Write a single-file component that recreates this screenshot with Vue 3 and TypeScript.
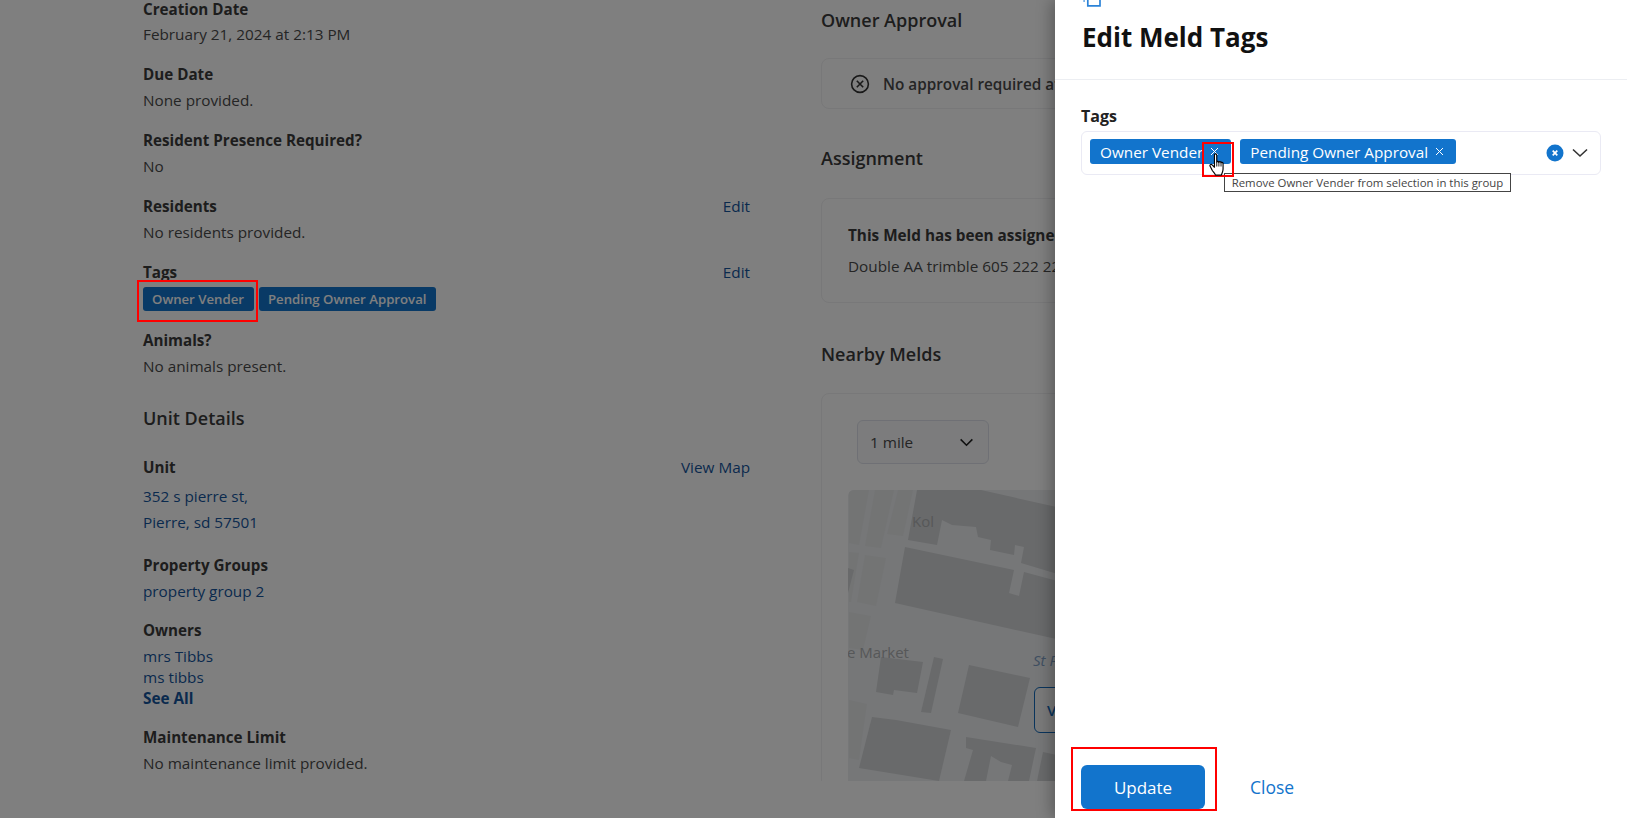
<script setup lang="ts">
interface Field {
  label: string
  value: string
  edit?: string
}

const topFields: Field[] = [
  { label: 'Creation Date', value: 'February 21, 2024 at 2:13 PM' },
  { label: 'Due Date', value: 'None provided.' },
  { label: 'Resident Presence Required?', value: 'No' },
  { label: 'Residents', value: 'No residents provided.', edit: 'Edit' },
]

const tags = ['Owner Vender', 'Pending Owner Approval']

const mapStrips = [
  '848,490 868,490 858,545 848,543',
  '874,490 893,490 880,548 864,546',
  '897,490 912,490 902,536 886,534',
  '848,552 858,553 850,602 848,602',
  '864,555 885,558 875,606 856,602',
  '848,612 870,616 862,650 848,648',
  '848,700 866,704 858,760 848,758',
]

const mapBlocks = [
  '916,490 980,490 1060,508 1060,575 1020,563 1023,547 1014,545 1013,555 989,550 990,540 977,537 975,527 951,525 941,520 936,545 907,540',
  '904,547 1013,570 1008,593 1018,596 1023,572 1060,582 1060,640 894,603',
  '880,657 922,662 916,693 893,690 892,695 875,692',
  '933,657 942,659 930,713 920,712',
  '968,665 1029,678 1017,727 957,713',
  '871,717 895,720 950,730 938,781 858,768',
  '965,737 1035,748 1028,781 1007,781 1011,765 1000,762 990,756 985,781 963,781 972,750 965,748',
  '1042,752 1060,756 1060,781 1036,781',
  '847,568 853,570 847,593',
]
</script>

<template>
  <div class="screen">
    <div class="page">
      <section class="left-col">
        <div v-for="field in topFields" :key="field.label" class="field">
          <div class="label-row">
            <span class="label">{{ field.label }}</span>
            <a v-if="field.edit" class="link">{{ field.edit }}</a>
          </div>
          <div class="value">{{ field.value }}</div>
        </div>

        <div class="label-row tags-label">
          <span class="label">Tags</span>
          <a class="link">Edit</a>
        </div>
        <div class="tag-list">
          <span v-for="tag in tags" :key="tag" class="tag">{{ tag }}</span>
        </div>

        <div class="field animals">
          <div class="label-row"><span class="label">Animals?</span></div>
          <div class="value">No animals present.</div>
        </div>

        <h2 class="section-title unit-title">Unit Details</h2>

        <div class="label-row unit-label"><span class="label">Unit</span><a class="link">View Map</a></div>
        <div class="address">
          <a class="link">352 s pierre st,</a>
          <a class="link">Pierre, sd 57501</a>
        </div>

        <div class="label-row group-label"><span class="label">Property Groups</span></div>
        <div class="group-value"><a class="link">property group 2</a></div>

        <div class="label-row"><span class="label">Owners</span></div>
        <div class="owners">
          <a class="link">mrs Tibbs</a>
          <a class="link">ms tibbs</a>
          <a class="link see-all">See All</a>
        </div>

        <div class="label-row"><span class="label">Maintenance Limit</span></div>
        <div class="value">No maintenance limit provided.</div>
      </section>

      <section class="right-col">
        <h2 class="section-title approval-title">Owner Approval</h2>
        <div class="card approval-card">
          <svg class="approval-icon" viewBox="0 0 20 20" width="20" height="20">
            <circle cx="10" cy="10" r="8.4" fill="none" stroke="#333" stroke-width="1.6" />
            <path d="M6.8 6.8l6.4 6.4M13.2 6.8l-6.4 6.4" fill="none" stroke="#333" stroke-width="1.6" />
          </svg>
          <span class="approval-text">No approval required at this time</span>
        </div>

        <h2 class="section-title assign-heading">Assignment</h2>
        <div class="card assign-card">
          <div class="assign-title">This Meld has been assigned to</div>
          <div class="assign-name">Double AA trimble 605 222 2222</div>
        </div>

        <h2 class="section-title">Nearby Melds</h2>
        <div class="card nearby-card">
          <div class="select">
            <span>1 mile</span>
            <svg viewBox="0 0 16 10" width="15" height="9">
              <path d="M1.5 1.5L8 8l6.5-6.5" fill="none" stroke="#222" stroke-width="1.8" />
            </svg>
          </div>
          <div class="map">
            <svg class="map-art" viewBox="847 490 213 291" width="213" height="291">
              <polygon v-for="points in mapStrips" :key="points" :points="points" fill="#e6e8e9" />
              <polygon v-for="points in mapBlocks" :key="points" :points="points" fill="#d2d4d6" />
              <text x="911" y="527" class="map-label">Kol</text>
              <text x="846" y="658" class="map-label">e Market</text>
              <text x="1032" y="666" class="map-label map-street">St P</text>
            </svg>
            <button class="map-button">View</button>
          </div>
        </div>
      </section>
    </div>

    <div class="backdrop"></div>

    <aside class="panel">
      <header class="panel-head">
        <svg class="copy-icon" viewBox="0 0 18 7" width="18" height="7">
          <path d="M4.8 -3H17V5.8H4.8Z" fill="none" stroke="#2b83d8" stroke-width="1.7" />
          <path d="M0.4 1h1.4" fill="none" stroke="#2b83d8" stroke-width="1.6" />
        </svg>
        <h1 class="panel-title">Edit Meld Tags</h1>
      </header>

      <div class="panel-body">
        <div class="tags-field-label">Tags</div>
        <div class="tag-control">
          <span v-for="tag in tags" :key="tag" class="chip">
            {{ tag }}
            <svg viewBox="0 0 9 9" width="9" height="9">
              <path d="M1 1l7 7M8 1L1 8" fill="none" stroke="#fff" stroke-width="1" />
            </svg>
          </span>
          <span class="control-spacer"></span>
          <svg class="clear-icon" viewBox="0 0 18 18" width="18" height="18">
            <circle cx="9" cy="9" r="8.5" fill="#1274cc" />
            <path d="M6.7 6.7l4.6 4.6M11.3 6.7l-4.6 4.6" fill="none" stroke="#fff" stroke-width="1.7" />
          </svg>
          <svg class="chevron-icon" viewBox="0 0 16 10" width="16" height="10">
            <path d="M1 1.5L8 8l7-6.5" fill="none" stroke="#333" stroke-width="1.6" />
          </svg>
        </div>
        <div class="tooltip">Remove Owner Vender from selection in this group</div>
      </div>

      <footer class="panel-foot">
        <button class="update-btn">Update</button>
        <a class="close-link">Close</a>
      </footer>
    </aside>

    <!-- annotation boxes and the pointer sit above everything -->
    <div class="mark mark-tag"></div>
    <div class="mark mark-remove"></div>
    <div class="mark mark-update"></div>
    <svg class="pointer" viewBox="0 0 20 27" width="18" height="24">
      <path
        d="M6 2.2c0-1.6 2.6-1.6 2.6 0v8c0-1 2.4-1 2.4.4 0-1.2 2.4-1.2 2.4.4 0-1 2.3-.9 2.3.7v6.4c0 3-1.4 4.4-1.9 6.8H7.2c-.7-2-2.2-3.2-3.6-5.2L1.2 15c-1-1.7 1-2.9 2.2-1.6L6 16z"
        fill="#fff"
        stroke="#000"
        stroke-width="1.3"
        stroke-linejoin="round"
      />
      <path d="M8.6 10.2v5M11 10.6v4.6M13.4 11v4.2" fill="none" stroke="#000" stroke-width="1" />
    </svg>
  </div>
</template>

<style>
html,
body {
  margin: 0;
  height: 100%;
  overflow: hidden;
  background: #fff;
}
</style>

<style scoped>
.screen {
  position: relative;
  width: 1627px;
  height: 818px;
  overflow: hidden;
  font-family: 'Open Sans', 'Noto Sans', sans-serif;
  font-size: 15.3px;
  color: #4a4a4a;
}
.page {
  display: flex;
  height: 781px;
  overflow: hidden;
  padding-left: 143px;
  box-sizing: border-box;
}
.left-col {
  flex: none;
  width: 607px;
  margin-top: -1px;
}
.right-col {
  flex: none;
  width: 700px;
  margin-left: 71px;
}
.field {
  margin-bottom: 20px;
}
.label-row {
  display: flex;
  justify-content: space-between;
  line-height: 20px;
  margin-bottom: 6px;
}
.field:first-child .label-row {
  margin-bottom: 5px;
}
.label {
  font-size: 15.2px;
  font-weight: 700;
  color: #3a3a3a;
}
.label-row .link {
  font-weight: 400;
}
.value {
  line-height: 20px;
}
.link {
  color: #14549c;
  text-decoration: none;
}
.tags-label {
  margin-bottom: 5px;
}
.tag-list {
  display: flex;
  gap: 5px;
  margin-bottom: 19px;
}
.tag {
  height: 24px;
  line-height: 24px;
  padding: 0 10px 0 9px;
  border-radius: 3px;
  background: #1274cc;
  color: #fff;
  font-size: 13.2px;
  font-weight: 600;
}
.animals {
  margin-bottom: 31px;
}
.section-title {
  margin: 0;
  font-size: 18px;
  font-weight: 600;
  line-height: 22px;
  color: #3a3a3a;
}
.unit-title {
  margin-bottom: 28px;
}
.unit-label {
  margin-bottom: 9px;
}
.address {
  display: flex;
  flex-direction: column;
  gap: 6px;
  line-height: 20px;
  margin-bottom: 23px;
}
.group-label {
  margin-bottom: 6px;
}
.group-value {
  line-height: 20px;
  margin-bottom: 19px;
}
.owners {
  display: flex;
  flex-direction: column;
  line-height: 21px;
  margin-bottom: 18px;
}
.see-all {
  font-weight: 700;
}
.right-col .section-title {
  margin-bottom: 28px;
}
.right-col .approval-title {
  margin-top: 9px;
  margin-bottom: 27px;
}
.right-col .assign-heading {
  margin-bottom: 29px;
}
.card {
  border: 1px solid #f0f0f2;
  border-radius: 8px;
  box-sizing: border-box;
}
.approval-card {
  display: flex;
  align-items: center;
  height: 51px;
  padding-left: 28px;
  margin-bottom: 38px;
}
.approval-text {
  margin-left: 13px;
  font-weight: 600;
}
.assign-card {
  height: 105px;
  padding: 26px 26px;
  margin-bottom: 40px;
}
.assign-title {
  font-weight: 700;
  line-height: 20px;
  margin-bottom: 11px;
  color: #3a3a3a;
}
.assign-name {
  line-height: 20px;
}
.nearby-card {
  height: 500px;
  padding: 26px 26px;
}
.select {
  display: flex;
  align-items: center;
  justify-content: space-between;
  width: 132px;
  height: 44px;
  box-sizing: border-box;
  margin-left: 9px;
  padding: 0 14px 0 12px;
  border: 1px solid #dfe1ea;
  border-radius: 6px;
  background: #f8f9fb;
}
.map {
  position: relative;
  width: 600px;
  height: 300px;
  margin-top: 26px;
  background: #eceef0;
  border-radius: 6px;
  overflow: hidden;
}
.map-art {
  display: block;
}
.map-label {
  font-size: 15px;
  fill: #aeb0b2;
}
.map-street {
  font-style: italic;
  fill: #7f9fc4;
}
.map-button {
  position: absolute;
  left: 186px;
  top: 197px;
  width: 120px;
  height: 46px;
  padding: 0 0 0 12px;
  text-align: left;
  border: 1px solid #1268b8;
  border-radius: 6px;
  background: #f5f5f5;
  color: #1268b8;
  font: 600 15px 'Open Sans', sans-serif;
}
.backdrop {
  position: absolute;
  inset: 0;
  background: rgba(0, 0, 0, 0.5);
}
.panel {
  position: absolute;
  top: 0;
  right: 0;
  bottom: 0;
  width: 572px;
  display: flex;
  flex-direction: column;
  background: #fff;
  box-shadow: -4px 0 14px rgba(0, 0, 0, 0.28);
}
.panel-head {
  height: 80px;
  box-sizing: border-box;
  padding-left: 26px;
  border-bottom: 1px solid #eceef2;
}
.copy-icon {
  display: block;
  margin-left: 2px;
}
.panel-title {
  margin: 14px 0 0 1px;
  font-size: 26px;
  font-weight: 700;
  line-height: 32px;
  color: #111;
}
.panel-body {
  position: relative;
  flex: 1;
  padding: 25px 26px 0;
}
.tags-field-label {
  font-size: 16px;
  font-weight: 700;
  line-height: 22px;
  color: #222;
  margin-bottom: 4px;
}
.tag-control {
  display: flex;
  align-items: center;
  gap: 9px;
  width: 520px;
  height: 44px;
  box-sizing: border-box;
  padding: 0 12px 3px 8px;
  border: 1px solid #eaeaf4;
  border-radius: 6px;
}
.chip {
  display: inline-flex;
  align-items: center;
  gap: 7px;
  height: 25px;
  padding: 0 12px 0 10px;
  border-radius: 3px;
  background: #1274cc;
  color: #fff;
  font-size: 15.3px;
}
.control-spacer {
  flex: 1;
}
.clear-icon,
.chevron-icon {
  margin-top: 3px;
}
.clear-icon {
  margin-right: -1px;
}
.tooltip {
  position: absolute;
  left: 169px;
  top: 93px;
  width: 287px;
  height: 19px;
  box-sizing: border-box;
  border: 1px solid #444;
  background: #fff;
  color: #444;
  font-size: 11.4px;
  line-height: 17px;
  text-align: center;
  white-space: nowrap;
}
.panel-foot {
  display: flex;
  align-items: center;
  gap: 45px;
  height: 44px;
  padding: 0 0 9px 26px;
}
.update-btn {
  width: 124px;
  height: 44px;
  border: 0;
  border-radius: 6px;
  background: #1274cc;
  color: #fff;
  font: 500 17px 'Open Sans', sans-serif;
}
.close-link {
  color: #1274cc;
  font-size: 17.5px;
}
.mark {
  position: absolute;
  box-sizing: border-box;
  border: 2px solid #f00;
}
.mark-tag {
  left: 137px;
  top: 280px;
  width: 121px;
  height: 42px;
}
.mark-remove {
  left: 1202px;
  top: 142px;
  width: 32px;
  height: 35px;
}
.mark-update {
  left: 1071px;
  top: 747px;
  width: 146px;
  height: 64px;
}
.pointer {
  position: absolute;
  left: 1209px;
  top: 153px;
}
</style>
